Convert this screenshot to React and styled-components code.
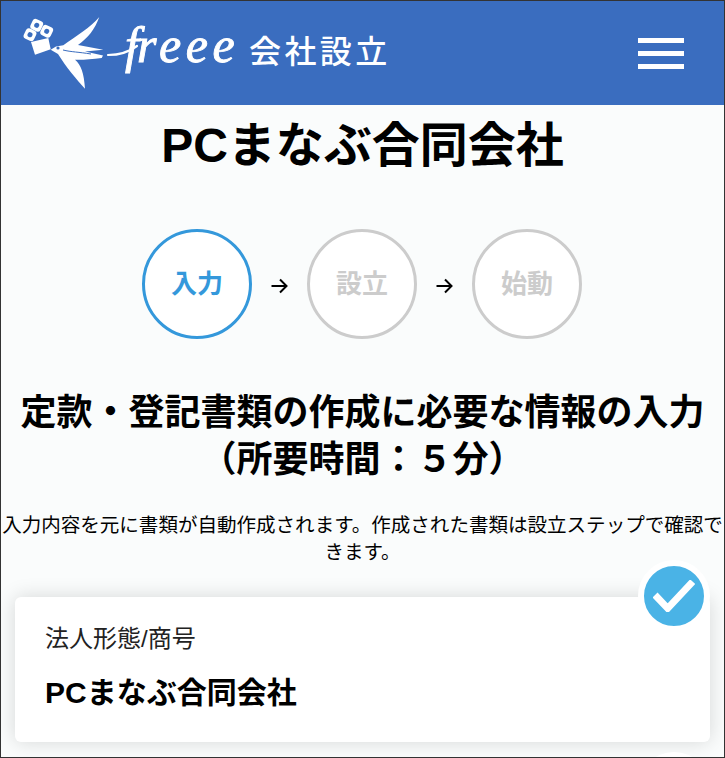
import React from "react";
import styled, { createGlobalStyle } from "styled-components";

const Global = createGlobalStyle`
  html, body { margin: 0; padding: 0; background: #fafcfc; }
  body { font-family: "Liberation Sans", "Noto Sans CJK JP", sans-serif; color: #000; }
  * { box-sizing: border-box; }
`;

const Frame = styled.div`
  width: 725px;
  height: 758px;
  border: 1px solid #333;
  overflow: hidden;
  background: #fafcfc;
`;

const Header = styled.header`
  height: 104px;
  background: #3a6dbf;
  display: flex;
  align-items: center;
  justify-content: space-between;
  padding: 0 40px 0 22px;
`;

const Brand = styled.div`
  display: flex;
  align-items: center;
  gap: 8px;
`;

const LogoMark = styled.svg`
  display: block;
  width: 218px;
  height: 80px;
`;

const BrandText = styled.span`
  color: #fff;
  font-size: 32px;
  line-height: 1;
  letter-spacing: 3.4px;
  font-weight: 500;
  margin-bottom: 3px;
`;

const Burger = styled.button`
  width: 46px;
  height: 31px;
  padding: 0;
  border: 0;
  background: none;
  display: flex;
  flex-direction: column;
  justify-content: space-between;
`;

const BurgerLine = styled.span`
  display: block;
  height: 5px;
  background: #fff;
`;

const Title = styled.h1`
  margin: 12px 0 0;
  font-size: 48px;
  line-height: 58px;
  font-weight: 700;
  text-align: center;
`;

const Steps = styled.ol`
  list-style: none;
  margin: 54px 0 0;
  padding: 0 1px 0 0;
  display: flex;
  justify-content: center;
  align-items: center;
  gap: 19px;
`;

const Step = styled.li`
  width: 110px;
  height: 110px;
  padding-bottom: 5px;
  border-radius: 50%;
  border: 3.5px solid ${(p) => (p.$active ? "#3498db" : "#ccc")};
  background: #fff;
  color: ${(p) => (p.$active ? "#3498db" : "#ccc")};
  display: flex;
  align-items: center;
  justify-content: center;
  font-size: 26px;
  font-weight: 700;
`;

const Arrow = styled.svg`
  display: block;
  width: 17px;
  height: 16px;
  margin-top: 3px;
`;

const Heading = styled.h2`
  margin: 50px 0 0;
  font-size: 36px;
  line-height: 47px;
  font-weight: 700;
  text-align: center;
`;

const Lead = styled.p`
  margin: 29px -2px 0;
  font-size: 19.55px;
  line-height: 27px;
  text-align: center;
`;

const Card = styled.section`
  position: relative;
  margin: 31px 14px 0;
  height: 145px;
  padding: 26px 30px;
  background: #fff;
  border-radius: 6px;
  box-shadow: 0 0 20px rgba(0, 0, 0, 0.15);
`;

const CheckBadge = styled.span`
  position: absolute;
  top: -37px;
  right: 0;
  width: 72px;
  height: 72px;
  border-radius: 50%;
  border: 6px solid #fff;
  background: #4ab3e6;
  display: flex;
  align-items: center;
  justify-content: center;
`;

const CheckIcon = styled.svg`
  display: block;
  width: 42px;
  height: 32px;
`;

const CardLabel = styled.div`
  font-size: 24px;
  line-height: 32px;
  color: #222;
`;

const CardValue = styled.div`
  margin-top: 18px;
  font-size: 30px;
  line-height: 40px;
  font-weight: 700;
`;

const NextBadge = styled.span`
  position: absolute;
  top: 155px;
  right: 0;
  width: 72px;
  height: 72px;
  border-radius: 50%;
  background: #fff;
`;

function Flower({ x, y, r }) {
  return (
    <g transform={`translate(${x} ${y}) rotate(${r})`}>
      <rect x="-5.6" y="-5.6" width="11.2" height="11.2" rx="3.2" fill="#fff" />
      <circle r="2.5" fill="#3a6dbf" />
    </g>
  );
}

function Logo() {
  return (
    <LogoMark viewBox="0 0 218 80" aria-label="freee">
      <Flower x={13.7} y={12.3} r={25} />
      <Flower x={7} y={21.7} r={25} />
      <Flower x={23.7} y={18.3} r={25} />
      <path d="M8 29 L25.3 25 L27.7 36.3 L12 41.7 Z" fill="#fff" />
      <path
        d="M27.7 36.7 L33 33.5 L40.3 32.3 C52 24 68 14 76.3 4 C72 16 65 25 55 32 L80.3 36.7 L62 38.6 L80 42.5 L78.7 45 C68 46.5 58 47 52 46.7 C58 52 61 60 62 75.7 C54 67 43 54 35 41 Z"
        fill="#fff"
      />
      <circle cx="35" cy="35" r="1.6" fill="#3a6dbf" />
      <path d="M40 37 C48 39 56 39 68 41" fill="none" stroke="#3a6dbf" strokeWidth="1" />
      <path d="M85 42 C96 42 106 39 114 33" fill="none" stroke="#fff" strokeWidth="2.2" strokeLinecap="round" />
      <text
        x="102"
        y="49"
        dx="0 -2 4.5 4.5 4.5"
        fill="#fff"
        stroke="#fff"
        strokeWidth="0.9"
        fontFamily="Liberation Serif, serif"
        fontStyle="italic"
        fontSize="50"
      >
        freee
      </text>
    </LogoMark>
  );
}

function ArrowIcon() {
  return (
    <Arrow viewBox="0 0 17 16">
      <path d="M0.5 8 H15.5 M9 1.5 L15.5 8 L9 14.5" fill="none" stroke="#000" strokeWidth="2" />
    </Arrow>
  );
}

export default function App() {
  return (
    <>
      <Global />
      <Frame>
        <Header>
          <Brand>
            <Logo />
            <BrandText>会社設立</BrandText>
          </Brand>
          <Burger aria-label="menu">
            <BurgerLine />
            <BurgerLine />
            <BurgerLine />
          </Burger>
        </Header>
        <Title>PCまなぶ合同会社</Title>
        <Steps>
          <Step $active>入力</Step>
          <ArrowIcon />
          <Step>設立</Step>
          <ArrowIcon />
          <Step>始動</Step>
        </Steps>
        <Heading>
          定款・登記書類の作成に必要な情報の入力
          <br />
          （所要時間：５分）
        </Heading>
        <Lead>入力内容を元に書類が自動作成されます。作成された書類は設立ステップで確認できます。</Lead>
        <Card>
          <CheckBadge>
            <CheckIcon viewBox="0 0 42 32">
              <path d="M2 15 L14.7 28.3 L39.7 1.7" fill="none" stroke="#fff" strokeWidth="7" />
            </CheckIcon>
          </CheckBadge>
          <CardLabel>法人形態/商号</CardLabel>
          <CardValue>PCまなぶ合同会社</CardValue>
          <NextBadge />
        </Card>
      </Frame>
    </>
  );
}
